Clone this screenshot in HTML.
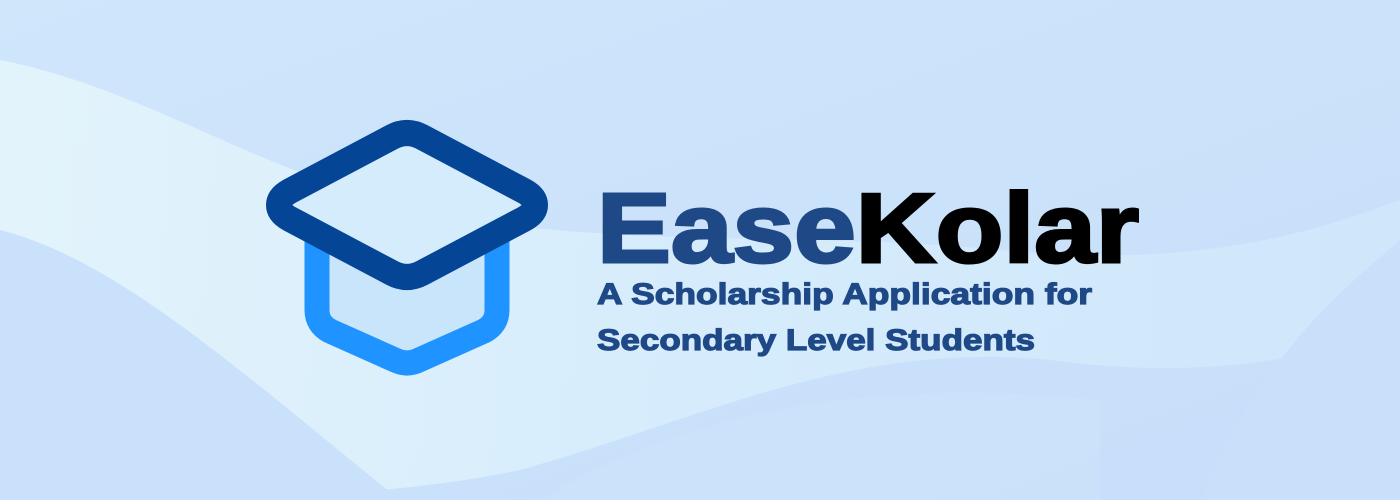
<!DOCTYPE html>
<html><head><meta charset="utf-8"><style>
html,body{margin:0;padding:0;width:1400px;height:500px;overflow:hidden;background:#cfe5fb}
</style></head><body>
<svg width="1400" height="500" viewBox="0 0 1400 500" xmlns="http://www.w3.org/2000/svg">
<defs>
<linearGradient id="bg" x1="0" y1="0" x2="1" y2="1">
<stop offset="0" stop-color="#cfe6fb"/><stop offset="1" stop-color="#c6defa"/>
</linearGradient>
<linearGradient id="sw" x1="0" y1="0" x2="1" y2="0">
<stop offset="0" stop-color="#e6f6fb"/><stop offset="0.5" stop-color="#d8eefc"/><stop offset="1" stop-color="#d0e8fb"/>
</linearGradient>
</defs>
<rect width="1400" height="500" fill="url(#bg)"/>
<path d="M0 60 C150 90 250 170 420 210 C600 250 800 230 1000 250 C1200 270 1320 230 1400 200 L1400 330 C1300 360 1200 380 1050 360 C850 340 700 420 520 470 C380 500 200 500 0 500 Z" fill="url(#sw)" opacity="0.85"/>
<path d="M0 230 C120 260 250 380 400 500 L0 500 Z" fill="#c9e1fa"/>
<path d="M1400 240 C1330 300 1260 360 1200 500 L1400 500 Z" fill="#c8e0f9"/>
<path d="M540 500 C700 400 900 380 1100 400 L1100 500 Z" fill="#cbe2fa" opacity="0.7"/>
<!-- cup -->
<path d="M317 240 V310 Q317 324 330 331 L395 360 Q407 366 419 360 L484 331 Q497 324 497 310 V240 Z" fill="#c9e5fc"/>
<path d="M317 240 V310 Q317 324 330 331 L395 360 Q407 366 419 360 L484 331 Q497 324 497 310 V240" fill="none" stroke="#1f93ff" stroke-width="25" stroke-linejoin="round"/>
<!-- cap -->
<path d="M279 205 Q279 197 290 191 L392 137 Q407 129 422 137 L524 191 Q535 197 535 205 Q535 213 524 219 L422 273 Q407 281 392 273 L290 219 Q279 213 279 205 Z" fill="#d4ecfb" stroke="#054596" stroke-width="26" stroke-linejoin="round"/>
<text x="597" y="262" font-family="Liberation Sans, sans-serif" font-weight="bold" font-size="98" textLength="542" lengthAdjust="spacingAndGlyphs" stroke-width="3"><tspan fill="#1e4886" stroke="#1e4886">Ease</tspan><tspan fill="#000" stroke="#000">Kolar</tspan></text>
<text x="597" y="304" font-family="Liberation Sans, sans-serif" font-weight="bold" font-size="30" fill="#1e4886" stroke="#1e4886" stroke-width="1.2" textLength="495" lengthAdjust="spacingAndGlyphs">A Scholarship Application for</text>
<text x="597" y="350" font-family="Liberation Sans, sans-serif" font-weight="bold" font-size="30" fill="#1e4886" stroke="#1e4886" stroke-width="1.2" textLength="438" lengthAdjust="spacingAndGlyphs">Secondary Level Students</text>
</svg>
</body></html>
